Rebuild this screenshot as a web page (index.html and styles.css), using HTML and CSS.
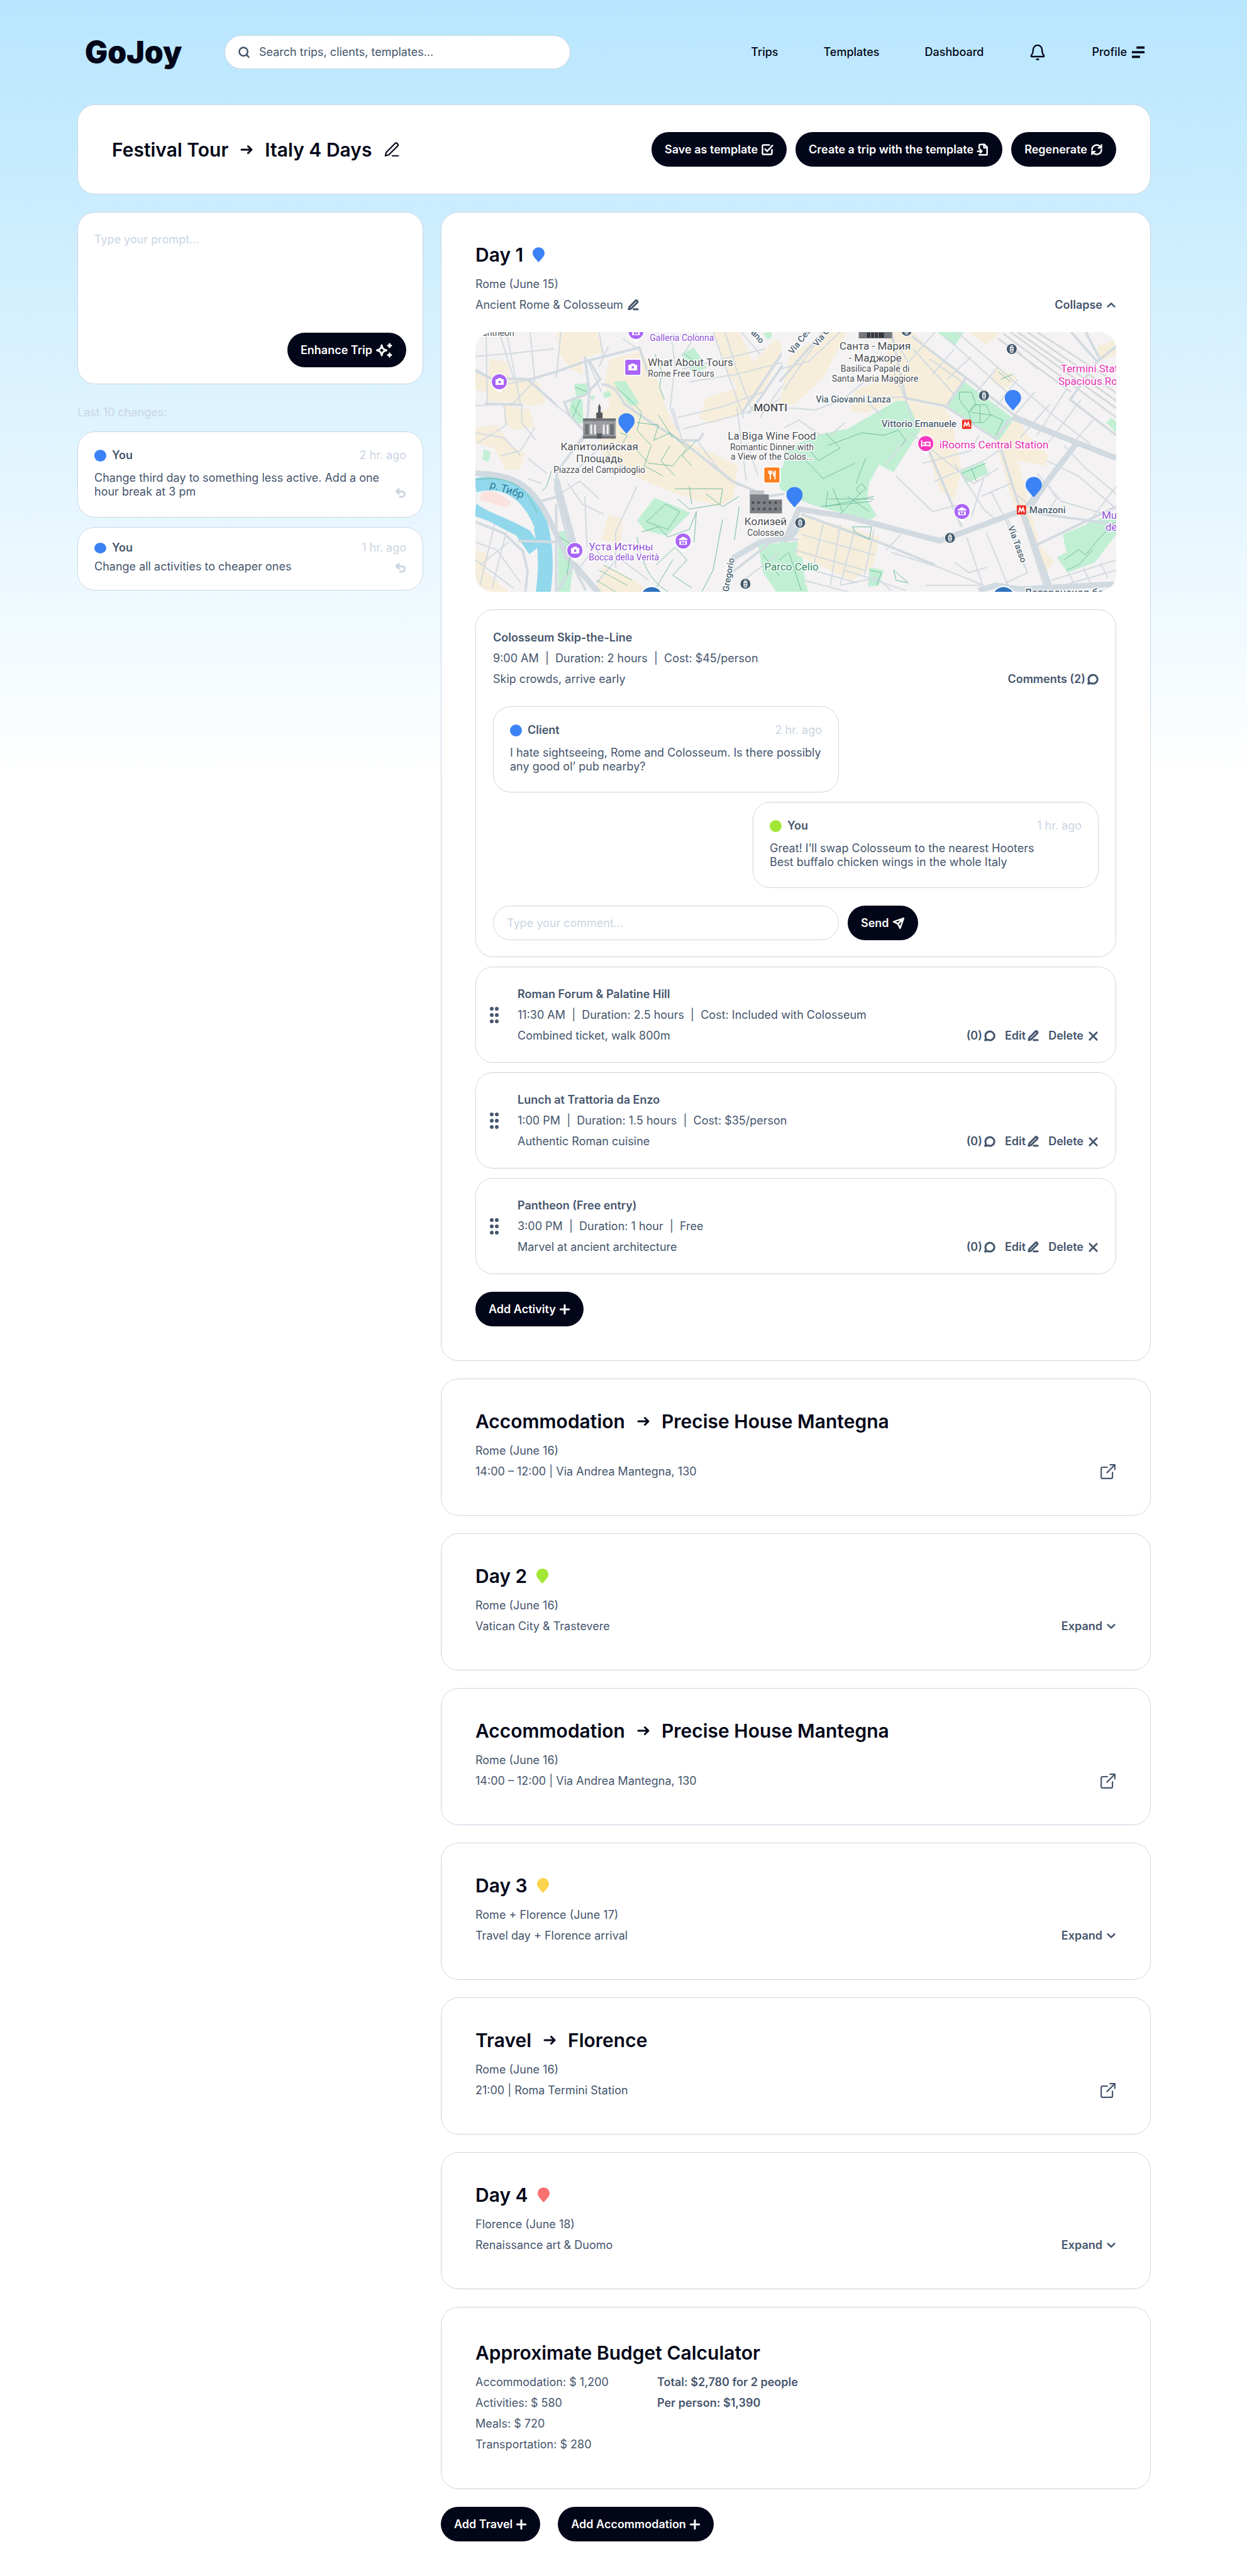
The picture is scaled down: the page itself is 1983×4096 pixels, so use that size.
FILE: index.html
```html
<!DOCTYPE html>
<html lang="en">
<head>
<meta charset="utf-8">
<meta name="viewport" content="width=device-width, initial-scale=1">
<title>GoJoy – Festival Tour</title>
<link rel="stylesheet" href="styles.css">
</head>
<body>
<svg class="sprite" aria-hidden="true">
  <symbol id="search" viewBox="0 0 24 24"><circle cx="11" cy="11" r="8"/><path d="m17 17 4 4.500"/></symbol>
  <symbol id="bell" viewBox="0 0 24 24"><path d="M18 8.500a6 6 0 0 0-12 0c0 5-1.500 6.500-2.700 8.200-.3.500 0 1.300.7 1.300h16c.7 0 1-.8.700-1.300C19.500 15 18 13.500 18 8.500"/><path d="M10.800 21.500c.5.900 1.900.9 2.400 0z"/></symbol>
  <symbol id="menu" viewBox="0 0 24 24"><path d="M9 4h14M1 12h22M1 20h14"/></symbol>
  <symbol id="pencil" viewBox="0 0 24 24"><path d="M16.500 3.200a2.600 2.600 0 0 1 3.800 3.700L7.500 19.600 2.500 21l1.400-5z"/><path d="M13 21h8.500"/></symbol>
  <symbol id="check" viewBox="0 0 24 24"><path d="m8 11 4 4L22 4"/><path d="M21 12v7a2 2 0 0 1-2 2H5a2 2 0 0 1-2-2V5a2 2 0 0 1 2-2h11"/></symbol>
  <symbol id="file" viewBox="0 0 24 24"><path d="M5 10V4a2 2 0 0 1 2-2h8l5 5v13a2 2 0 0 1-2 2H5"/><path d="M14 2v6h6M2 15h8M7 12l3 3-3 3"/></symbol>
  <symbol id="refresh" viewBox="0 0 24 24"><path d="M3 12a9 9 0 0 1 15.500-6.200L21 8.500M21 3v5.500h-5.500M21 12a9 9 0 0 1-15.500 6.200L3 15.500M3 21v-5.500h5.500"/></symbol>
  <symbol id="sparkles" viewBox="0 0 28 24"><path d="M10 4c.9 5 2.300 6.600 7.500 8-5.200 1.400-6.600 3-7.500 8-.9-5-2.300-6.600-7.500-8C7.700 10.600 9.100 9 10 4z"/><path d="M22.500 2v5M20 4.500h5M22.500 17v5M20 19.500h5"/></symbol>
  <symbol id="undo" viewBox="0 0 24 24"><path d="M8.500 3.500 3 8.500l5.500 5M3.500 8.500H15a5.800 5.800 0 0 1 0 11.600h-4.500"/></symbol>
  <symbol id="up" viewBox="0 0 24 24"><path d="m4 16 8-8 8 8"/></symbol>
  <symbol id="down" viewBox="0 0 24 24"><path d="m4 8 8 8 8-8"/></symbol>
  <symbol id="comment" viewBox="0 0 24 24"><path d="M7.500 20.200A9.500 9.300 0 1 0 3.800 16.500L2.300 21.700z"/></symbol>
  <symbol id="send" viewBox="0 0 24 24"><path d="M21.500 2.500 2.500 9.200l8.300 4 4 8.300zM21.500 2.500 10.800 13.200"/></symbol>
  <symbol id="x" viewBox="0 0 24 24"><path d="M4 4l16 16M20 4 4 20"/></symbol>
  <symbol id="plus" viewBox="0 0 24 24"><path d="M12 3v18M3 12h18"/></symbol>
  <symbol id="external" viewBox="0 0 24 24"><path d="M15 2h7v7M22 2 10.500 13.500M18.500 13v7a2 2 0 0 1-2 2H4a2 2 0 0 1-2-2V7.500a2 2 0 0 1 2-2h7"/></symbol>
  <symbol id="arrow" viewBox="0 0 20 20"><path d="M2 10h16M12.500 4.500 18 10l-5.500 5.500"/></symbol>
  <symbol id="grip" viewBox="0 0 14 26"><g fill="currentColor" stroke="none"><circle cx="3" cy="3" r="3"/><circle cx="11" cy="3" r="3"/><circle cx="3" cy="13" r="3"/><circle cx="11" cy="13" r="3"/><circle cx="3" cy="23" r="3"/><circle cx="11" cy="23" r="3"/></g></symbol>
  <symbol id="pin" viewBox="0 0 26 32"><path fill="currentColor" stroke="none" d="M13 0C5.800 0 0 5.700 0 12.700 0 20 7.500 25.500 11.600 31.200c.7 1 2.100 1 2.800 0C18.500 25.500 26 20 26 12.700 26 5.700 20.200 0 13 0z"/></symbol>
  <symbol id="camera" viewBox="-15 -15 30 34"><path d="M-13.500 0a13.500 13.500 0 1 1 19 12.300L0 18l-5.500-5.700A13.500 13.500 0 0 1-13.500 0z" fill="#fff" stroke="none"/><circle r="12" fill="#a964f7" stroke="none"/><path d="M-6-4h3l1.500-2h4L4-4h3v9H-6z" fill="#fff" stroke="none"/><circle cx=".5" cy=".5" r="2" fill="#a964f7" stroke="none"/></symbol>
  <symbol id="museum" viewBox="-15 -15 30 34"><path d="M-13.500 0a13.500 13.500 0 1 1 19 12.300L0 18l-5.500-5.700A13.500 13.500 0 0 1-13.500 0z" fill="#fff" stroke="none"/><circle r="12" fill="#a964f7" stroke="none"/><path d="M-7-3 0-7l7 4v1.500H-7zM-6 0h12v6H-6z" fill="#fff" stroke="none"/><path d="M-2.500 5V1.500L0 4l2.500-2.500V5" fill="none" stroke="#a964f7" stroke-width="1.500"/></symbol>
  <symbol id="tram" viewBox="-10 -10 20 20"><circle r="8.500" fill="#43596d" stroke="#fff" stroke-width="1"/><rect x="-3" y="-4" width="6" height="8" rx="1" fill="#fff" stroke="none"/><path d="M-2-1h4M-1.500 2h3M-2-5.500h4" stroke="#43596d" stroke-width="1.500"/><path d="M-2-5.500h4M-2.500 5.500h5" stroke="#fff" stroke-width="1"/></symbol>
  <symbol id="metro" viewBox="0 0 15 15"><rect width="15" height="15" rx="2" fill="#ef2d24" stroke="none"/><path d="M3 11.500 5 4.500l2.500 5 2.500-5 2 7" fill="none" stroke="#fff" stroke-width="2"/></symbol>
</svg>

<div class="page">
  <header class="topbar">
    <a class="logo" href="#">GoJoy</a>
    <label class="search">
      <svg class="icon"><use href="#search"/></svg>
      <input type="search" placeholder="Search trips, clients, templates..." aria-label="Search trips, clients, templates">
    </label>
    <nav class="nav">
      <a href="#">Trips</a>
      <a href="#">Templates</a>
      <a href="#">Dashboard</a>
      <button class="plain" type="button" aria-label="Notifications"><svg class="icon bell"><use href="#bell"/></svg></button>
      <button class="plain profile" type="button">Profile <svg class="icon menu"><use href="#menu"/></svg></button>
    </nav>
  </header>

  <section class="card trip">
    <h1 class="title">Festival Tour <svg class="icon arrow"><use href="#arrow"/></svg> Italy 4 Days <svg class="icon edit"><use href="#pencil"/></svg></h1>
    <div class="trip-actions">
      <button class="btn" type="button">Save as template <svg class="icon"><use href="#check"/></svg></button>
      <button class="btn" type="button">Create a trip with the template <svg class="icon"><use href="#file"/></svg></button>
      <button class="btn" type="button">Regenerate <svg class="icon"><use href="#refresh"/></svg></button>
    </div>
  </section>

  <div class="columns">
    <aside class="side">
      <form class="card prompt">
        <textarea placeholder="Type your prompt..." aria-label="Type your prompt"></textarea>
        <button class="btn" type="button">Enhance Trip <svg class="icon wide"><use href="#sparkles"/></svg></button>
      </form>
      <h2 class="side-label">Last 10 changes:</h2>
      <div class="changes">
        <article class="card note">
          <header class="note-head"><span class="dot blue"></span><b>You</b><time>2 hr. ago</time></header>
          <div class="note-body"><p>Change third day to something less active. Add a one hour break at 3 pm</p><button class="plain undo" type="button" aria-label="Undo"><svg class="icon"><use href="#undo"/></svg></button></div>
        </article>
        <article class="card note short">
          <header class="note-head"><span class="dot blue"></span><b>You</b><time>1 hr. ago</time></header>
          <div class="note-body"><p>Change all activities to cheaper ones</p><button class="plain undo" type="button" aria-label="Undo"><svg class="icon"><use href="#undo"/></svg></button></div>
        </article>
      </div>
    </aside>

    <main class="plan">
      <section class="card day open">
        <h2 class="title">Day 1 <svg class="icon pin blue"><use href="#pin"/></svg></h2>
        <p>Rome (June 15)</p>
        <div class="row"><p class="with-icon">Ancient Rome &amp; Colosseum <svg class="icon"><use href="#pencil"/></svg></p><button class="plain toggle" type="button">Collapse <svg class="icon"><use href="#up"/></svg></button></div>

        <svg class="map" viewBox="0 0 1018 413" role="img" aria-label="Map of Rome">
          <rect width="1018" height="413" fill="#f4f2f3"/>
          <g class="left-half" transform="matrix(.3776 0 0 .404 -68 -203.600)">
            <g fill="#f6eedb">
              <path d="M525 504h165l30 80-95 25 10 65-55-25-45-60zM240 610l75 10 10 60 120 20 30 80-60 15-70-15-120-5zM180 660l60 20-10 60-50-10zM745 610l130-30 60 80 50 150 60 110 40 20 200 90-20 130-60 30-180-50-130-50-140-70-60-60 30-60-50-70 70-30-20-100zM1180 504h110l60 120 90-90 50 20-100 180-90 90-120 40-60-20 30-80 130-40-60-100zM180 880l90-10 60 80 60 30-20 60-60 10-50-90-80-20zM300 790l110 20 20 70-90 10-40-30zM720 1420l130 60 60 45H680zM180 1360l60 20-20 60 100 86H180zM740 1220l60 20-10 100-80-20zM1545 1200h25v330h-30z"/>
            </g>
            <g fill="#c1efd4">
              <path d="M1045 590l55-25 55 80-60 20zM595 710l55-5 5 40-50 15zM585 760l45 10 5 90-30 5-30-50zM760 700l50-5 60 90-40 10zM215 965l30 10-10 40-25-10zM860 1245l75-90 150 60-100 90-90-20zM1480 1000l90-20v200l-110-60zM1370 1340l200-15v205h-120l-60-80zM528 1290l40-5 30 90-20 150h-50zM1390 510l30-10 10 20-20 15zM715 745l25-10 15 20-30 10zM660 760l25-10-10 25z"/>
            </g>
            <path d="M180 1110c130-25 215 25 265 130 35 90 35 190 20 290" fill="none" stroke="#91d8ec" stroke-width="62"/>
            <path d="M180 1200c60 10 110 45 190 80l60 80" fill="none" stroke="#91d8ec" stroke-width="58"/>
            <path d="M180 1135c110-30 200 20 250 140l-20 10c-100-55-180-70-230-110z" fill="#f4f2f3"/><path d="M205 1138c40-20 85 0 125 38l-20 18-110-30z" fill="#fbe2df"/>
            <g class="street">
              <path d="M225 504l5 280M280 504l60 180M180 600l130-10 200-20M410 504l20 190-90 90-160 10M310 500l60 290M180 650l120 60 120-20M300 790l10 80-120 70M375 790v70l60 70M540 504l-20 180M400 690l130 110 60 40M180 900l120 20 70 70M700 504l20 100M650 610l60 130M1005 530l15 100-20 170 30 90M740 560l-40 80M800 530l80 50M1050 650l170-40 180-40M1080 700l200-30 288-70M1055 885l210-50 140-40 170-80M1030 840l180-40 180-60M1180 504l50 130 80 210M1230 504l50 150 60 150M1568 620l-110 110-80 110M1050 600l60-90M1300 504l80 90M430 880l-60 90-80 20M400 1000l80 60M400 1080l60 20M570 1100l60 80 90 40M640 1150l10 200M520 1150l100-60 80 70M860 1110l-90 180v140M720 940l30 60 100 60M560 1000l60-60 70-70M590 1060l100-90M1120 940l80 100 90 70M1010 800l40 130M1280 800l40 290M1320 940l50 130M180 1330l90 30 100 130M200 1420l120-90M260 1260l-60 240M310 1290l-60 220M180 1400l160 110M1568 1350l-120 30-140 100M620 1430l60-80 50 60M690 1490l90-100 130 90M1470 1420l60 80"/>
            </g>
            <g class="road">
              <path d="M180 655l60 30 170 5 110-30 120-40 230-55 40 110M655 610l50 80-60 60-90 30 20 50 70 70-80 100-40 50-10 70 90 330 40 70M640 600l20 140-10 120M180 1250l120 45 80 70 20 80-10 80M180 1060c180 0 250 60 320 200l60 130 130 140M520 1080l40 120M360 1325l160 5M520 1180v350M600 1410l-80 120M710 710c50 0 70 30 100 80l110 70 140 80 200 150 150 60 70-10M400 690l120 100M1568 504l-190 260-50 60M1530 504l-230 320M1030 930h90l20-30M1568 1320h-130l-180 130-40 80M380 790l-160-5M450 1170l100-25"/>
            </g>
            <path class="artery" d="M180 1060c180 0 250 60 320 200l70 130 130 140M520 1080l90 310M1568 1235l-60 75-130 20-110 60-40 140"/>
            <g class="trail"><path d="M935 590l30 70-10 60 20 50M820 760l60 60-20 70 60 60-30 80 80 40M860 860l90 10-20 60 70-30 70 60-60 70-100-10-60-60M1000 950l-40 60 60 60M950 830l60 90M790 900l30 10-20 30M1020 1120h200l-10 60-130 20-50-40M1080 1110l10 70M1150 1140l70 50 70-40M880 1290l70-20 40 40 90-30 30-70M900 1250l80-70 60 30-50 70zM940 1420l80-70 50 50-60 60 80 50M1010 1400l-70 110M1110 1210l-10 120M1220 1240l-40 200-50 90M860 1310c20 110 60 180 140 220M180 1085c140-20 210 20 260 130M1290 1190l-20 130M1500 1050l-20 60M1390 1380l100 120M1460 1400l60-30 40 130M600 720l50 20M585 790l40 50M620 770l-30 70M535 1310l50 30-20 120M1060 590l60 40M770 720l60 50M500 1050l-20 60-20 20M1110 930l-60 60 40 40"/></g>
            <path d="M700 1440l120 60M720 1420l120 60M690 1480l80 46" fill="none" stroke="#5db593" stroke-width="2"/>
          </g>
          <g class="right-half" transform="matrix(.3864 0 0 .404 482.800 -203.600)">
            <path d="M0 504h1568v1024H110z" fill="#f4f2f3"/>
            <g fill="#f6eedb"><path d="M40 600l150-96 90 0-100 180L60 790H0zM450 504h100l210 190-70 100-220-20-110 50-70-10 20-80 130-50zM890 640l90 40-50 50-60-30zM530 780l150 20 30 50 40 200-30 110-60-30-60-180zM880 880l110-30 30 60 90 80-20 40-110-20 90 330 60 70-50 50-60-160-60-130-70-230zM90 1220l320 90-20 110-90 60-230-100zM780 504h130l-60 50zM1310 560l76-30v60l-70 30z"/></g>
            <g fill="#c1efd4"><path d="M755 695l210 150-60 85-215-135zM480 775h45l55 115-110 165-60-30-40 70-10 70 40 60-30 20-230-60-100-40-20-180 150-60 110-20zM745 1050l95-35 20 45-95 40zM650 504h110l-40 55zM1165 1300l221-90v90l-90 110-110 40-45-60 40-20zM0 1330h50l70 197H0zM370 1430l60 10-20 60-45 5zM1345 860l20-20 21 20v40zM0 1040l50-20 60 20v120L0 1110z"/></g>
            <g fill="none" stroke="#d6d8da" stroke-width="7"><path d="M920 510l466 330M950 504l436 300M980 504l406 270M1020 504l366 240M1060 504l326 200M900 530l300 210"/></g>
            <g class="street">
              <path d="M0 650l120-30 130-116M20 730l160-226M0 800l150 10 110-40 100-80M640 504l-110 120-40-70M720 570l-90 100M790 600l-100 90M900 640l-90 100M980 690l-90 110M1050 740l-100 110M1110 790l-120 130M1180 730l-120 180M1240 770l-150 190M1290 850l-80 90M550 570l170 180M680 520l290 250M730 504l400 330 150 110M620 610l130 90M960 560l100 90M460 640l60 130 40 120M290 760h230M350 770l70 60M20 880l60-30 90 60M270 860l-60 50M540 900l260 200 100-60M590 1020l200-50 30-60M640 1090l200-80 110-70M480 1070l150 140 120-30M430 1030l100-110M790 1230l50-150M830 1150l120-50M720 1020l120 180 60 50M870 1130l60 110 80 190M1100 1010l130 60 156 130M1170 950l90 90 126 100M1060 1060l100 110 180 50M1050 1200l-80-60M1110 1110l30 50-30 40M1386 1110l-120 150M180 1260l-40 170M250 1260l-40 240M310 1280l-60 220M390 1280l-40 180M90 1300l300 80M60 1360l290 80M100 1430l220 60M500 1300l-60 60M460 1370l200 60 180 70M720 1410l60 40 70-20M770 1310l70 200M850 1290l90 210M940 1240l80 210-90 40M1120 1480l266-80M1130 1510l256-70M1190 1450l30 60M1250 1430l30 60M1320 1410l30 60M270 1440l250 80M250 1500l150-30 60 50M600 1500h230M100 1480l200 50"/>
            </g>
            <g class="road"><path d="M0 700l180-196M545 520l150 110 270 200 421 170M690 790l80-110M460 504l60 260 160 30 210 130 60-80M610 960l140 310M900 930l200 600M1220 940l-180 250M1060 1340l326-150M1386 560l-80 60-110 150 190 140M1200 504l110 120M1386 1260l-380-50M1260 504l60 110M90 1220l320 110 230 90"/></g>
            <path class="artery" d="M20 1330l60-130 200 30 380 95 340-120M1020 1190l200-245M960 840l426 160M1000 1210l120 318M820 1520l70-20 100 15 396-20"/>
            <g class="trail"><path d="M740 740l50 0 20 50-30 30-40-50zM800 790h50l20 40-30 30h-50l-10-40zM825 790v70M790 820l80 10M870 830l50 20-30 60M200 950l140-50 90 10 60-20 30 40-20 20M110 950l50 60 90-50-60-60M110 1010l70 70 130-60M355 1000l-40 100M340 1100l15 20-25 20-15-20zM200 1130l-10 60 200-40M200 1160h190M170 1190l210-20M220 1120l40 90M340 1130l-90 90M280 1150l90 60M300 1270h80l-10 50-60-30zM750 1060l100-40M790 1040l20 50M1170 1400l60-40 30 20 60-70 60-60M1180 1440l50-20 60-60M900 660l50 40M910 690l50-20M370 1440l50 10-20 50M470 1440l60 50-50-10zM0 1400l40-30 50 150M10 1440l40-20"/></g>
          </g>
          <g class="landmark">
            <path d="M171 138h52v31h-52z" fill="#9c9ea3"/><path d="M171 137h52v4h-52zM171 165h52v4h-52z" fill="#6d7076"/><path d="M192 137v-9h3v-9l2-5 2 5v9h3v9z" fill="#55585e"/>
            <path d="M174 146h6v17h-6zM214 146h6v17h-6z" fill="#6d7076"/><path d="M184 147v15M190 147v15M204 147v15M210 147v15" stroke="#f0f0f0" stroke-width="3"/><path d="M193 169v-8h8v8z" fill="#55585e"/>
            <path d="M436 252h22v6h8v8h21v22h-51z" fill="#7d8085"/><path d="M436 252h22v6h-22z" fill="#c3c5c8"/><path d="M439 271h46M439 281h46" stroke="#4c4f54" stroke-width="4" stroke-dasharray="4 5"/>
            <path d="M609 0h53v10h-53z" fill="#75787d"/><path d="M622 1h27v8h-27z" fill="#33363a"/><path d="M628 1v8M634 1v8M640 1v8" stroke="#a0a2a6"/>
          </g>
          <g class="labels">
            <text x="11" y="6" class="s14">antheon</text>
            <text x="277" y="14" class="s14 purple">Galleria Colonna</text>
            <text x="274" y="54" class="s17">What About Tours</text><text x="274" y="71" class="s14">Rome Free Tours</text>
            <text x="442" y="126" class="s17 strong">MONTI</text>
            <g text-anchor="middle">
              <text x="197" y="188" class="s17">Капитолийская</text><text x="197" y="207" class="s17">Площадь</text><text x="197" y="224" class="s14">Piazza del Campidoglio</text>
              <text x="471" y="171" class="s17">La Biga Wine Food</text><text x="471" y="188" class="s14">Romantic Dinner with</text><text x="471" y="203" class="s14">a View of the Colos...</text>
              <text x="461" y="307" class="s17">Колизей</text><text x="461" y="324" class="s14">Colosseo</text>
              <text x="635" y="28" class="s17">Санта - Мария</text><text x="635" y="47" class="s17">- Маджоре</text><text x="635" y="63" class="s14">Basilica Papale di</text><text x="635" y="79" class="s14">Santa Maria Maggiore</text>
            </g>
            <text transform="translate(22 247) rotate(18)" class="s17 water">р. Тибр</text>
            <text x="180" y="347" class="s17 purple">Уста Истины</text><text x="180" y="363" class="s14 purple">Bocca della Verità</text>
            <text x="459" y="379" class="s17 park">Parco Celio</text>
            <text transform="translate(402 413) rotate(-80)" class="s14 slate">Gregorio</text>
            <text transform="translate(434 -2) rotate(48)" class="s14 slate">rano</text>
            <text transform="translate(504 36) rotate(-52)" class="s14 slate">Via Ces</text>
            <text transform="translate(543 24) rotate(-52)" class="s14 slate">Via C</text>
            <text x="541" y="112" class="s14 slate">Via Giovanni Lanza</text>
            <text x="645" y="151" class="s15 slate">Vittorio Emanuele</text>
            <text x="737" y="185" class="s17 pink">iRooms Central Station</text>
            <text x="930" y="64" class="s17 pink">Termini Stat</text><text x="926" y="84" class="s17 pink">Spacious Roo</text>
            <text x="880" y="288" class="s15 slate">Manzoni</text>
            <text x="995" y="297" class="s17 purple">Mu</text><text x="1001" y="316" class="s17 purple">de</text>
            <text transform="translate(846 310) rotate(70)" class="s14 slate">Via Tasso</text>
            <text x="872" y="420" class="s17 slate">Латеранская база</text>
          </g>
          <use href="#camera" x="23" y="64" width="30" height="34"/><use href="#camera" x="143" y="332" width="30" height="34"/><use href="#museum" x="315" y="317" width="30" height="34"/><use href="#museum" x="758" y="270" width="30" height="34"/><use href="#museum" x="240" y="-16" width="30" height="34"/>
          <rect x="236" y="42" width="28" height="28" rx="4" fill="#fff"/><rect x="238" y="44" width="24" height="24" rx="2" fill="#a964f7"/><path d="M243 52h3l2-2h4l2 2h3v9h-14z" fill="#fff"/><circle cx="250" cy="56" r="2" fill="#a964f7"/>
          <rect x="457" y="213" width="28" height="28" rx="4" fill="#fff"/><rect x="459" y="215" width="24" height="24" rx="2" fill="#fb7f21"/><path d="M466 220v4q2.500 3 5 0v-4M468.500 220v14M476 220v14M476 221q-3 3-2 7h2" fill="none" stroke="#fff" stroke-width="2"/>
          <path d="M702 177a13.500 13.500 0 1 1 19 12.300l-5.500 5.700-5.500-5.700a13.500 13.500 0 0 1-8-12.300z" fill="#fff"/><circle cx="715.500" cy="177" r="12" fill="#f637bd"/><path d="M709 172v10M709 180h13v2M722 180v-5h-7v5M711 176h3" fill="none" stroke="#fff" stroke-width="2"/>
          <use href="#tram" x="842" y="17" width="20" height="20"/><use href="#tram" x="798" y="91" width="20" height="20"/><use href="#tram" x="506" y="293" width="20" height="20"/><use href="#tram" x="744" y="317" width="20" height="20"/><use href="#tram" x="419" y="390" width="20" height="20"/><use href="#tram" x="675" y="-12" width="20" height="20"/>
          <use href="#metro" x="773" y="139" width="15" height="15"/><use href="#metro" x="860" y="275" width="15" height="15"/>
          <g fill="#2f72bd" stroke="#fff" stroke-width="2"><circle cx="280" cy="422" r="18"/><circle cx="839" cy="422" r="18"/></g>
          <g color="#3b82f6"><use href="#pin" x="227" y="129" width="26" height="32"/><use href="#pin" x="494" y="246" width="26" height="32"/><use href="#pin" x="841" y="92" width="26" height="32"/><use href="#pin" x="874" y="230" width="26" height="32"/></g>
        </svg>

        <div class="activities">
          <article class="card activity expanded">
            <h3>Colosseum Skip-the-Line</h3>
            <p>9:00 AM &nbsp;|&nbsp; Duration: 2 hours &nbsp;|&nbsp; Cost: $45/person</p>
            <div class="row"><p>Skip crowds, arrive early</p><button class="plain" type="button">Comments (2)<svg class="icon"><use href="#comment"/></svg></button></div>
            <div class="thread">
              <div class="card note"><header class="note-head"><span class="dot blue"></span><b>Client</b><time>2 hr. ago</time></header><p>I hate sightseeing, Rome and Colosseum. Is there possibly any good ol’ pub nearby?</p></div>
              <div class="card note mine"><header class="note-head"><span class="dot green"></span><b>You</b><time>1 hr. ago</time></header><p>Great! I’ll swap Colosseum to the nearest Hooters<br>Best buffalo chicken wings in the whole Italy</p></div>
            </div>
            <form class="reply"><input type="text" placeholder="Type your comment..." aria-label="Type your comment"><button class="btn" type="button">Send<svg class="icon"><use href="#send"/></svg></button></form>
          </article>
          <article class="card activity">
            <svg class="icon grip"><use href="#grip"/></svg>
            <div class="lines"><h3>Roman Forum &amp; Palatine Hill</h3><p>11:30 AM &nbsp;|&nbsp; Duration: 2.5 hours &nbsp;|&nbsp; Cost: Included with Colosseum</p>
            <div class="row"><p>Combined ticket, walk 800m</p><div class="acts"><button class="plain" type="button">(0)<svg class="icon"><use href="#comment"/></svg></button><button class="plain" type="button">Edit<svg class="icon"><use href="#pencil"/></svg></button><button class="plain" type="button">Delete <svg class="icon cross"><use href="#x"/></svg></button></div></div></div>
          </article>
          <article class="card activity">
            <svg class="icon grip"><use href="#grip"/></svg>
            <div class="lines"><h3>Lunch at Trattoria da Enzo</h3><p>1:00 PM &nbsp;|&nbsp; Duration: 1.5 hours &nbsp;|&nbsp; Cost: $35/person</p>
            <div class="row"><p>Authentic Roman cuisine</p><div class="acts"><button class="plain" type="button">(0)<svg class="icon"><use href="#comment"/></svg></button><button class="plain" type="button">Edit<svg class="icon"><use href="#pencil"/></svg></button><button class="plain" type="button">Delete <svg class="icon cross"><use href="#x"/></svg></button></div></div></div>
          </article>
          <article class="card activity">
            <svg class="icon grip"><use href="#grip"/></svg>
            <div class="lines"><h3>Pantheon (Free entry)</h3><p>3:00 PM &nbsp;|&nbsp; Duration: 1 hour &nbsp;|&nbsp; Free</p>
            <div class="row"><p>Marvel at ancient architecture</p><div class="acts"><button class="plain" type="button">(0)<svg class="icon"><use href="#comment"/></svg></button><button class="plain" type="button">Edit<svg class="icon"><use href="#pencil"/></svg></button><button class="plain" type="button">Delete <svg class="icon cross"><use href="#x"/></svg></button></div></div></div>
          </article>
        </div>
        <button class="btn add" type="button">Add Activity <svg class="icon plus"><use href="#plus"/></svg></button>
      </section>

      <section class="card day">
        <h2 class="title">Accommodation <svg class="icon arrow"><use href="#arrow"/></svg> Precise House Mantegna</h2>
        <p>Rome (June 16)</p>
        <div class="row"><p>14:00 – 12:00 | Via Andrea Mantegna, 130</p><a class="open-link" href="#" aria-label="Open"><svg class="icon"><use href="#external"/></svg></a></div>
      </section>
      <section class="card day">
        <h2 class="title">Day 2 <svg class="icon pin green"><use href="#pin"/></svg></h2>
        <p>Rome (June 16)</p>
        <div class="row"><p>Vatican City &amp; Trastevere</p><button class="plain toggle" type="button">Expand <svg class="icon"><use href="#down"/></svg></button></div>
      </section>
      <section class="card day">
        <h2 class="title">Accommodation <svg class="icon arrow"><use href="#arrow"/></svg> Precise House Mantegna</h2>
        <p>Rome (June 16)</p>
        <div class="row"><p>14:00 – 12:00 | Via Andrea Mantegna, 130</p><a class="open-link" href="#" aria-label="Open"><svg class="icon"><use href="#external"/></svg></a></div>
      </section>
      <section class="card day">
        <h2 class="title">Day 3 <svg class="icon pin yellow"><use href="#pin"/></svg></h2>
        <p>Rome + Florence (June 17)</p>
        <div class="row"><p>Travel day + Florence arrival</p><button class="plain toggle" type="button">Expand <svg class="icon"><use href="#down"/></svg></button></div>
      </section>
      <section class="card day">
        <h2 class="title">Travel <svg class="icon arrow"><use href="#arrow"/></svg> Florence</h2>
        <p>Rome (June 16)</p>
        <div class="row"><p>21:00 | Roma Termini Station</p><a class="open-link" href="#" aria-label="Open"><svg class="icon"><use href="#external"/></svg></a></div>
      </section>
      <section class="card day">
        <h2 class="title">Day 4 <svg class="icon pin red"><use href="#pin"/></svg></h2>
        <p>Florence (June 18)</p>
        <div class="row"><p>Renaissance art &amp; Duomo</p><button class="plain toggle" type="button">Expand <svg class="icon"><use href="#down"/></svg></button></div>
      </section>

      <section class="card day budget">
        <h2 class="title">Approximate Budget Calculator</h2>
        <div class="sums">
          <ul><li>Accommodation: $ 1,200</li><li>Activities: $ 580</li><li>Meals: $ 720</li><li>Transportation: $ 280</li></ul>
          <ul class="totals"><li>Total: $2,780 for 2 people</li><li>Per person: $1,390</li></ul>
        </div>
      </section>
      <div class="footer-actions">
        <button class="btn" type="button">Add Travel <svg class="icon plus"><use href="#plus"/></svg></button>
        <button class="btn" type="button">Add Accommodation <svg class="icon plus"><use href="#plus"/></svg></button>
      </div>
    </main>
  </div>
</div>
</body>
</html>
```
FILE: styles.css
```css
:root {
  --ink: #020618;
  --text: #45556c;
  --line: #cad5e2;
  --blue: #3b82f6;
  --green: #a3e635;
  --yellow: #fcd34d;
  --red: #f87171;
}

* { box-sizing: border-box; }

body {
  margin: 0;
  background: #fff linear-gradient(#b8e6fe, #fff 1240px) no-repeat;
  color: var(--text);
  font: 400 18px/22px Inter, "Noto Sans", sans-serif;
}

h1, h2, h3, p, ul { margin: 0; padding: 0; }
ul { list-style: none; }
h3, b { font-size: 18px; font-weight: 600; }
a { color: inherit; text-decoration: none; }
button, input, textarea { font: inherit; color: inherit; }
button { cursor: pointer; }

.sprite { position: absolute; width: 0; height: 0; }

.icon {
  flex: none;
  width: 20px;
  height: 20px;
  fill: none;
  stroke: currentColor;
  stroke-width: 3;
  stroke-linecap: round;
  stroke-linejoin: round;
}

.page { padding: 56px 153px 55px 123px; }

.card {
  background: #fff;
  border: 1px solid var(--line);
  border-radius: 28px;
}

.btn {
  display: inline-flex;
  align-items: center;
  gap: 5px;
  height: 55px;
  padding: 0 21px;
  border: 0;
  border-radius: 28px;
  background: var(--ink);
  color: #fff;
  font-weight: 600;
  white-space: nowrap;
}
.btn .wide { width: 28px; height: 24px; stroke-width: 3; }
.btn .plus { width: 18px; height: 18px; stroke-width: 4; }

.plain {
  display: inline-flex;
  align-items: center;
  gap: 3px;
  padding: 0;
  border: 0;
  background: none;
  font-weight: 600;
}

/* Top bar */
.topbar {
  display: flex;
  align-items: center;
  height: 54px;
  padding: 0 8px 0 12px;
}
.logo {
  width: 222px;
  color: var(--ink);
  font-size: 48px;
  font-weight: 900;
  line-height: 54px;
}
.search {
  display: flex;
  align-items: center;
  gap: 12px;
  width: 550px;
  height: 54px;
  padding: 0 20px;
  border: 1px solid var(--line);
  border-radius: 28px;
  background: #fff;
}
.search input { flex: 1; border: 0; outline: 0; background: none; }
.search input::placeholder { color: var(--text); opacity: 1; }
.nav {
  display: flex;
  align-items: center;
  gap: 72px;
  margin-left: auto;
  color: var(--ink);
  font-weight: 500;
}
.nav .plain { font-weight: 500; }
.bell { width: 28px; height: 28px; stroke-width: 2; }
.profile { gap: 6px; }
.menu { width: 24px; height: 22px; stroke-width: 4; stroke-linecap: butt; }

/* Trip heading */
.title {
  display: flex;
  align-items: center;
  gap: 19px;
  color: var(--ink);
  font-size: 30px;
  font-weight: 600;
  line-height: 36px;
}
.arrow { width: 20px; height: 20px; stroke-width: 3; }
.trip {
  display: flex;
  align-items: center;
  justify-content: space-between;
  margin-top: 56px;
  padding: 43px 54px;
}
.edit { width: 26px; height: 28px; stroke-width: 2; }
.trip-actions { display: flex; gap: 14px; }

.columns {
  display: grid;
  grid-template-columns: 550px 1fr;
  align-items: start;
  gap: 28px;
  margin-top: 28px;
}

/* Side column */
.prompt {
  display: flex;
  flex-direction: column;
  align-items: flex-end;
  height: 274px;
  padding: 32px 26px 26px;
}
.prompt textarea {
  flex: 1;
  width: 100%;
  padding: 0;
  border: 0;
  outline: 0;
  resize: none;
}
.prompt textarea::placeholder,
.reply input::placeholder { color: var(--line); opacity: 1; }
.side-label {
  margin: 34px 0 19px;
  color: var(--line);
  font-size: 18px;
  font-weight: 400;
}
.changes { display: grid; gap: 15px; }

.note { padding: 26px 26px 29px; }
.note-head {
  display: flex;
  align-items: center;
  gap: 9px;
  margin-bottom: 14px;
}
.note-head time { margin-left: auto; color: var(--line); }
.dot { width: 19px; height: 19px; border-radius: 50%; background: currentColor; }
.note-body {
  display: flex;
  align-items: flex-end;
  justify-content: space-between;
}
.undo { color: var(--line); }
.undo .icon { width: 18px; height: 18px; stroke-width: 4; }
.note.short { padding: 21px 26px 26px; }
.short .note-head { margin-bottom: 8px; }
.short .dot { height: 17px; }

.blue { color: var(--blue); }
.green { color: var(--green); }
.yellow { color: var(--yellow); }
.red { color: var(--red); }

/* Plan */
.plan { display: grid; gap: 28px; }
.day { padding: 49px 54px 58px; }
.day > .title { margin-bottom: 18px; }
.day > p { margin-bottom: 11px; }
.title .pin { width: 19px; height: 24px; margin-left: -4px; }
.row {
  display: flex;
  align-items: center;
  justify-content: space-between;
  height: 22px;
}
.with-icon { display: flex; align-items: center; gap: 7px; }
.toggle { gap: 6px; }
.toggle .icon { width: 16px; height: 16px; stroke-width: 4; }
.open-link .icon { display: block; width: 26px; height: 26px; stroke-width: 2; }

.day.open { padding-bottom: 54px; }
.map {
  display: block;
  width: 100%;
  height: auto;
  margin-top: 32px;
  border-radius: 28px;
}
.street path, .road path, .artery, .trail path { fill: none; vector-effect: non-scaling-stroke; }
.street path { stroke: #d3dbe1; stroke-width: 2; }
.road path { stroke: #d3dbe1; stroke-width: 4; }
.artery { stroke: #d1dae0; stroke-width: 9; stroke-linejoin: round; }
.trail path { stroke: #6fbd9e; stroke-width: 1; }
.labels {
  fill: #4a4d52;
  stroke: #fff;
  stroke-width: 3px;
  stroke-linejoin: round;
  paint-order: stroke;
  font-family: Roboto, "Noto Sans", sans-serif;
}
.s14 { font-size: 14px; }
.s15 { font-size: 15px; }
.s17 { font-size: 17px; }
.strong { font-weight: 500; }
.purple { fill: #8e4fd6; }
.pink { fill: #e52fb0; }
.park { fill: #2c8a62; }
.slate { fill: #4b5f70; font-weight: 500; }
.water { fill: #2b7d98; stroke: none; }

.activities { display: grid; gap: 15px; margin: 28px 0; }
.activity {
  display: flex;
  align-items: center;
  gap: 30px;
  padding: 32px 27px 31px 22px;
}
.lines { flex: 1; display: grid; gap: 11px; }
.grip { width: 14px; height: 26px; }
.acts { display: flex; gap: 15px; }
.acts .icon, .expanded .row .icon, .with-icon .icon { width: 18px; height: 18px; stroke-width: 4; }
.acts .cross { width: 17px; height: 17px; margin-left: 4px; stroke-width: 4; }
.activity.expanded { display: grid; gap: 11px; padding: 33px 27px 26px; }
.thread { display: grid; gap: 15px; margin-top: 21px; }
.thread .note { width: 550px; padding: 26px 26px 29px; }
.thread .mine { justify-self: end; }
.reply { display: flex; gap: 14px; margin-top: 17px; }
.reply input {
  width: 550px;
  height: 55px;
  padding: 0 21px;
  border: 1px solid var(--line);
  border-radius: 28px;
  outline: 0;
}
.add { vertical-align: top; }

.day.budget { padding: 54px 54px 59px; }
.sums { display: grid; grid-template-columns: 289px 1fr; }
.sums ul { display: grid; align-content: start; gap: 11px; }
.totals { font-weight: 600; }
.footer-actions { display: flex; gap: 28px; }
```
